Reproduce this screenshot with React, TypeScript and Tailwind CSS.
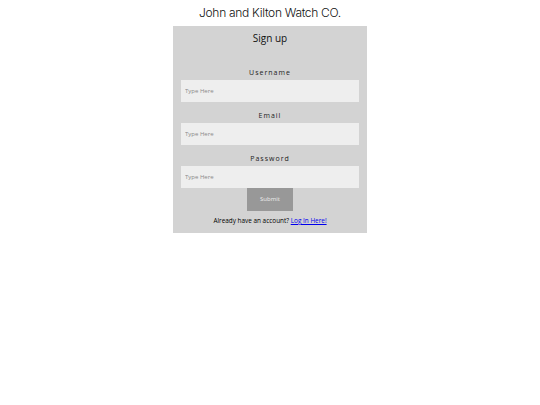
import React from "react";

function Field({ label }: { label: string }) {
  return (
    <div className="flex flex-col items-center">
      <label className="h-[13px] text-[7px] leading-[13px] tracking-[1px] text-[#222]">{label}</label>
      <input
        type="text"
        placeholder="Type Here"
        className="mt-[1px] h-[22px] w-[178px] bg-[#eeeeee] px-[4px] text-[6px] text-[#333] outline-none placeholder:text-[#8a8a8a]"
      />
    </div>
  );
}

export default function App() {
  return (
    <div className="flex flex-col items-center bg-white" style={{ fontFamily: '"Open Sans", sans-serif' }}>
      <h1
        className="mt-[5px] h-[21px] text-[12px] font-light leading-[16px] tracking-[-0.3px] text-[#111]"
        style={{ fontFamily: 'Inter, "Open Sans", sans-serif' }}
      >
        John and Kilton Watch CO.
      </h1>
      <form className="flex w-[194px] flex-col items-center bg-[#d3d3d3] pt-[4px] pb-[8px]">
        <h2 className="h-[16px] text-[10px] leading-[16px] text-[#111]">Sign up</h2>
        <div className="mt-[20px] flex flex-col gap-[7px]">
          <Field label="Username" />
          <Field label="Email" />
          <Field label="Password" />
        </div>
        <button
          type="button"
          className="h-[23px] w-[46px] bg-[#989898] text-[6px] text-[#eeeeee]"
        >
          Submit
        </button>
        <p className="mt-[5px] text-[6.4px] leading-[9px] text-black">
          Already have an account?{" "}
          <a href="#" className="text-[#0000ee] underline">
            Log In Here!
          </a>
        </p>
      </form>
    </div>
  );
}
